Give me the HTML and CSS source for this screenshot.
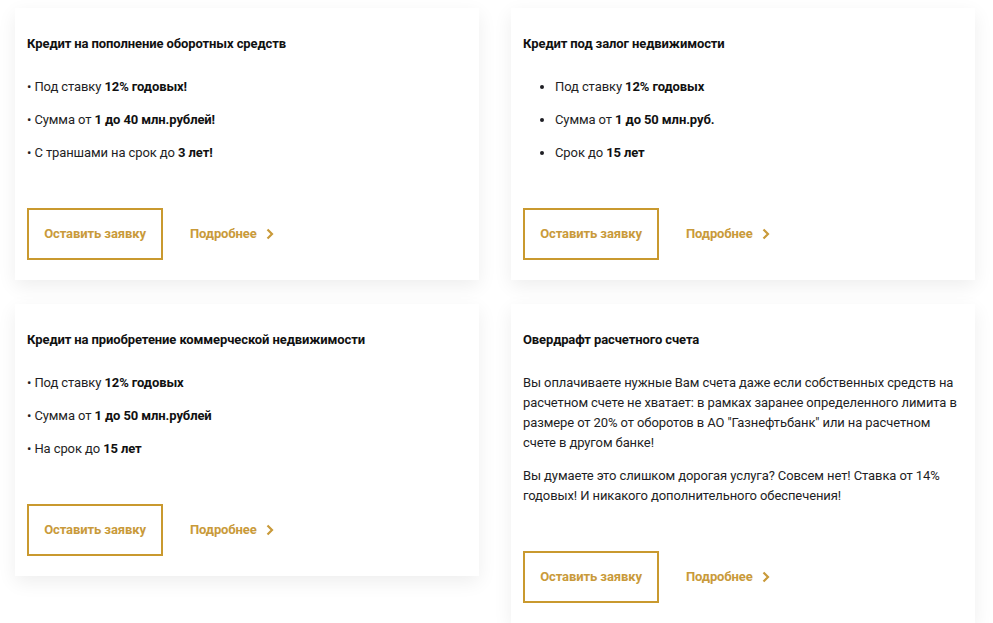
FILE: index.html
```html
<!DOCTYPE html>
<html lang="ru">
<head>
<meta charset="utf-8">
<link rel="stylesheet" href="styles.css">
</head>
<body>
<div class="grid">
  <div class="card">
    <h3 class="title">Кредит на пополнение оборотных средств</h3>
    <div class="body">
      <p>• Под ставку <b>12% годовых!</b></p>
      <p>• Сумма от <b>1 до 40 млн.рублей!</b></p>
      <p>• С траншами на срок до <b>3 лет!</b></p>
    </div>
    <div class="actions">
      <a class="btn">Оставить заявку</a>
      <a class="more">Подробнее <svg width="8" height="12" viewBox="0 0 8 12"><path d="M1.5 1.5 L6 6 L1.5 10.5" fill="none" stroke="currentColor" stroke-width="2.2"/></svg></a>
    </div>
  </div>
  <div class="card">
    <h3 class="title">Кредит под залог недвижимости</h3>
    <ul class="body list">
      <li>Под ставку <b>12% годовых</b></li>
      <li>Сумма от <b>1 до 50 млн.руб.</b></li>
      <li>Срок до <b>15 лет</b></li>
    </ul>
    <div class="actions">
      <a class="btn">Оставить заявку</a>
      <a class="more">Подробнее <svg width="8" height="12" viewBox="0 0 8 12"><path d="M1.5 1.5 L6 6 L1.5 10.5" fill="none" stroke="currentColor" stroke-width="2.2"/></svg></a>
    </div>
  </div>
  <div class="card">
    <h3 class="title">Кредит на приобретение коммерческой недвижимости</h3>
    <div class="body">
      <p>• Под ставку <b>12% годовых</b></p>
      <p>• Сумма от <b>1 до 50 млн.рублей</b></p>
      <p>• На срок до <b>15 лет</b></p>
    </div>
    <div class="actions">
      <a class="btn">Оставить заявку</a>
      <a class="more">Подробнее <svg width="8" height="12" viewBox="0 0 8 12"><path d="M1.5 1.5 L6 6 L1.5 10.5" fill="none" stroke="currentColor" stroke-width="2.2"/></svg></a>
    </div>
  </div>
  <div class="card">
    <h3 class="title">Овердрафт расчетного счета</h3>
    <div class="body text">
      <p>Вы оплачиваете нужные Вам счета даже если собственных средств на расчетном счете не хватает: в рамках заранее определенного лимита в размере от 20% от оборотов в АО "Газнефтьбанк" или на расчетном счете в другом банке!</p>
      <p>Вы думаете это слишком дорогая услуга? Совсем нет! Ставка от 14% годовых! И никакого дополнительного обеспечения!</p>
    </div>
    <div class="actions">
      <a class="btn">Оставить заявку</a>
      <a class="more">Подробнее <svg width="8" height="12" viewBox="0 0 8 12"><path d="M1.5 1.5 L6 6 L1.5 10.5" fill="none" stroke="currentColor" stroke-width="2.2"/></svg></a>
    </div>
  </div>
</div>
</body>
</html>
```

FILE: styles.css
```css
* { box-sizing: border-box; }
html, body { margin: 0; padding: 0; background: #fff; }
body {
  font-family: Roboto, "Liberation Sans", Arial, sans-serif;
  font-size: 13px;
  letter-spacing: -0.1px;
  color: #1e1e24;
  overflow: hidden;
}
.grid {
  display: grid;
  grid-template-columns: 464px 464px;
  column-gap: 32px;
  row-gap: 24px;
  align-items: start;
  padding: 8px 0 0 15px;
}
.card {
  background: #fff;
  padding: 26px 12px 20px 12px;
  box-shadow: 0 6px 18px rgba(0, 0, 0, 0.07);
}
.title {
  margin: 0 0 23px;
  font-size: 13px;
  line-height: 20px;
  font-weight: 700;
  color: #111;
}
.body p, .body li {
  margin: 0 0 13px;
  line-height: 20px;
}
.body p:last-child, .body li:last-child { margin-bottom: 0; }
.list {
  margin: 0;
  padding-left: 32px;
}
.text p { margin-bottom: 13px; }
b { font-weight: 700; color: #111; }
.actions {
  display: flex;
  align-items: center;
  margin-top: 45px;
}
.btn {
  display: flex;
  align-items: center;
  justify-content: center;
  width: 136px;
  height: 52px;
  padding-bottom: 1px;
  border: 2px solid #c9992f;
  color: #c99a3a;
  font-weight: 700;
  font-size: 13px;
}
.more {
  display: flex;
  align-items: center;
  margin-left: 27px;
  padding-bottom: 1px;
  color: #c99a3a;
  font-weight: 700;
  font-size: 13px;
}
.more svg { margin-left: 9px; }
```
